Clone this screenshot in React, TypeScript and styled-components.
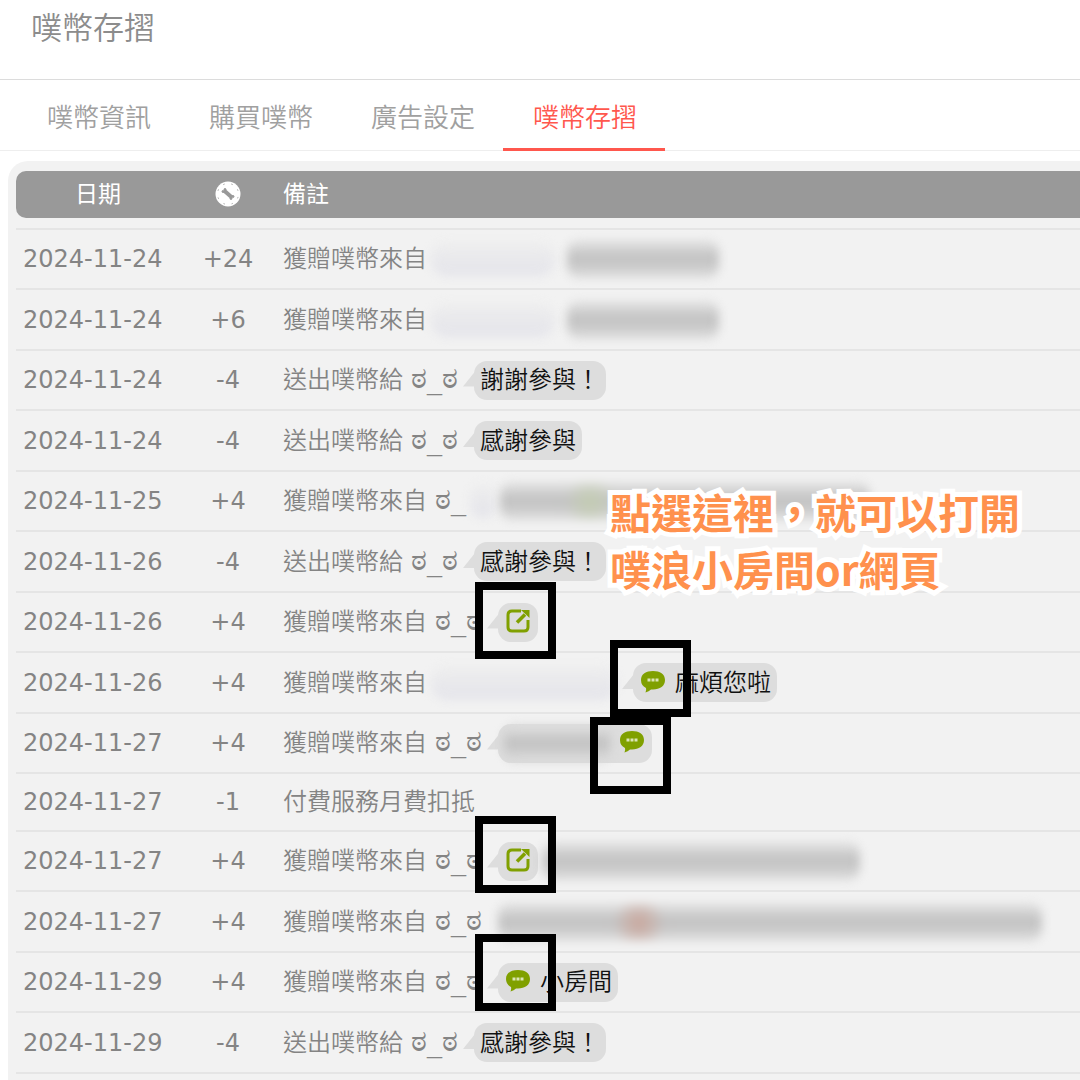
import React from 'react';
import styled, { createGlobalStyle, css } from 'styled-components';

const GlobalStyle = createGlobalStyle`
  * { box-sizing: border-box; }
  body {
    margin: 0;
    background: #fff;
    color: #848484;
    font-family: 'DejaVu Sans', 'Noto Sans CJK TC', sans-serif;
  }
`;

const Page = styled.div`
  display: flex;
  flex-direction: column;
  min-height: 100vh;
  overflow-x: hidden;
`;

const Header = styled.header`
  height: 80px;
  padding: 5px 31px 0;
  border-bottom: 1px solid #dcdcdc;
`;

const Title = styled.h1`
  margin: 0;
  font-size: 31px;
  line-height: 46px;
  font-weight: 350;
  color: #8c8c8c;
`;

const Tabs = styled.nav`
  display: flex;
  height: 71px;
  padding-left: 17px;
  border-bottom: 1px solid #eee;
`;

const Tab = styled.a<{ $active?: boolean }>`
  width: 162px;
  height: 71px;
  padding-left: 2px;
  line-height: 76px;
  text-align: center;
  font-size: 26px;
  font-weight: 350;
  text-decoration: none;
  color: ${(p) => (p.$active ? '#ff574d' : '#a0a0a0')};
  border-bottom: 3px solid ${(p) => (p.$active ? '#ff574d' : 'transparent')};
`;

const Panel = styled.main`
  position: relative;
  flex: 1;
  margin: 10px 0 0 8px;
  padding: 10px 0 6px 8px;
  border-radius: 20px 0 0 0;
  background: #f2f2f2;
`;

const Ledger = styled.table`
  width: 100%;
  table-layout: fixed;
  border-collapse: separate;
  border-spacing: 0;
  font-size: 24px;
`;

const HeadCell = styled.th<{ $width?: number; $left?: boolean }>`
  width: ${(p) => (p.$width ? `${p.$width}px` : 'auto')};
  height: 47px;
  padding: 0 7px 2px;
  background: #999;
  color: #fff;
  font-size: 23px;
  line-height: 30px;
  font-weight: 400;
  text-align: ${(p) => (p.$left ? 'left' : 'center')};
  &:first-child { border-radius: 10px 0 0 10px; }
  svg { display: block; margin: 0 auto; }
`;

const Body = styled.tbody`
  &::before {
    content: '';
    display: block;
    height: 10px;
  }
`;

const Cell = styled.td<{ $center?: boolean }>`
  padding: 0 7px;
  border-top: 2px solid #e5e5e5;
  line-height: 30px;
  white-space: nowrap;
  text-align: ${(p) => (p.$center ? 'center' : 'left')};
`;

const Row = styled.tr<{ $plain?: boolean }>`
  height: ${(p) => (p.$plain ? 58 : 60)}px;
  ${(p) => !p.$plain && css`&:nth-child(even) { height: 61px; }`}
  &:last-child { height: 63px; }
  &:last-child ${Cell} { border-bottom: 2px solid #e5e5e5; }
`;

const Note = styled.div`
  display: flex;
  align-items: center;
  height: 39px;
  font-weight: 350;
`;

const Face = styled.span`
  margin-left: 8px;
  font-size: 30px;
  line-height: 34px;
  height: 38px;
`;

const Bubble = styled.span`
  position: relative;
  display: inline-flex;
  align-items: center;
  gap: 8px;
  height: 39px;
  margin-left: 16px;
  padding: 0 6px;
  border-radius: 13px;
  background: #ddd;
  color: #111;
  &::before {
    content: '';
    position: absolute;
    left: -11px;
    top: 11px;
    width: 12px;
    height: 15px;
    background: #ddd;
    clip-path: polygon(0 100%, 100% 0, 100% 100%);
  }
`;

const IconLink = styled.a`
  display: block;
  width: 28px;
  height: 26px;
  padding: 0 2px;
  color: #80a000;
  svg { display: block; }
`;

const SmudgedName = styled.span<{ $width: number }>`
  width: ${(p) => p.$width}px;
  height: 34px;
  margin-left: 4px;
  border-radius: 16px;
  background: linear-gradient(#eeeeee, #e4e4ea);
  filter: blur(5px);
`;

const SmudgedText = styled.span<{ $width: number; $gap?: number; $tint?: string; $at?: number }>`
  width: ${(p) => p.$width}px;
  height: 38px;
  margin-left: ${(p) => p.$gap ?? 12}px;
  border-radius: 12px;
  background:
    ${(p) => p.$tint && css`radial-gradient(circle at ${p.$at}px 20px, ${p.$tint}, transparent 26px),`}
    linear-gradient(#e4e4e4, #c0c0c0 50%, #dedede);
  filter: blur(5px);
`;

const Annotations = styled.div`
  position: absolute;
  inset: 0;
  pointer-events: none;
`;

const Frame = styled.span<{ $x: number; $y: number }>`
  position: absolute;
  left: ${(p) => p.$x}px;
  top: ${(p) => p.$y}px;
  width: 81px;
  height: 77px;
  border: 8px solid #000;
`;

const Callout = styled.p`
  position: absolute;
  left: 602px;
  top: 322px;
  margin: 0;
  font-family: 'Noto Sans CJK TC', sans-serif;
  font-size: 41px;
  line-height: 57px;
  font-weight: 700;
  white-space: nowrap;
  color: #ff914d;
  -webkit-text-stroke: 10px #fff;
  paint-order: stroke fill;
`;

const CoinIcon = () => (
  <svg width="26" height="26" viewBox="0 0 26 26" role="img" aria-label="噗幣">
    <circle cx="13" cy="13" r="12.5" fill="#fff" />
    <circle cx="13" cy="13" r="10.5" fill="none" stroke="#aaa" strokeWidth="1" strokeDasharray="1.5 6.75" strokeDashoffset="-3" />
    <g fill="#999" stroke="#999">
      <path d="M9 9.500 17 16.500" strokeWidth="4" />
      <circle cx="8" cy="10.500" r="1" /><circle cx="10" cy="8.500" r="1" />
      <circle cx="16" cy="17.500" r="1" /><circle cx="18" cy="15.500" r="1" />
    </g>
  </svg>
);

const OpenIcon = () => (
  <svg width="24" height="24" viewBox="0 0 24 24" fill="none" stroke="currentColor" strokeWidth="3">
    <path d="M15 2H6Q2 2 2 6V18Q2 22 6 22H18Q22 22 22 18V11" />
    <path d="M11 13.500 19 5.500" strokeWidth="3.500" />
    <path d="M15 1H23.500V9Q19.500 5 15 1Z" fill="currentColor" stroke="none" />
  </svg>
);

const ChatIcon = () => (
  <svg width="24" height="24" viewBox="0 0 24 24">
    <path
      d="M12 1C19 1 24 4 24 10S19 19.500 12 19.500H10Q8 21.500 4.500 22.500Q5.500 20 5 18Q0 15.500 0 10C0 4 5 1 12 1Z"
      fill="currentColor"
    />
    <path d="M6.500 8.500h3v3h-3zM10.500 8.500h3v3h-3zM14.500 8.500h3v3h-3z" fill="#dce5b8" />
  </svg>
);

type Icon = 'open' | 'chat';

const ActionLink = ({ icon }: { icon: Icon }) => (
  <IconLink href="#" aria-label={icon === 'open' ? '打開網頁' : '打開噗浪小房間'}>
    {icon === 'open' ? <OpenIcon /> : <ChatIcon />}
  </IconLink>
);

const Got = ({ children }: { children?: React.ReactNode }) => (
  <Note>獲贈噗幣來自{children}</Note>
);

const Sent = ({ message }: { message: string }) => (
  <Note>
    送出噗幣給<Face>ಠ_ಠ</Face>
    <Bubble>{message}</Bubble>
  </Note>
);

type Entry = { date: string; amount: string; note: React.ReactNode; plain?: boolean };

const entries: Entry[] = [
  { date: '2024-11-24', amount: '+24', note: <Got><SmudgedName $width={124} /><SmudgedText $width={152} /></Got> },
  { date: '2024-11-24', amount: '+6', note: <Got><SmudgedName $width={124} /><SmudgedText $width={152} /></Got> },
  { date: '2024-11-24', amount: '-4', note: <Sent message="謝謝參與！" /> },
  { date: '2024-11-24', amount: '-4', note: <Sent message="感謝參與" /> },
  { date: '2024-11-25', amount: '+4', note: <Got><Face>ಠ_</Face><SmudgedName $width={26} /><SmudgedText $width={370} $gap={4} $tint="#c3ccb2" $at={90} /></Got> },
  { date: '2024-11-26', amount: '-4', note: <Sent message="感謝參與！" /> },
  { date: '2024-11-26', amount: '+4', note: <Got><Face>ಠ_ಠ</Face><Bubble><ActionLink icon="open" /></Bubble></Got> },
  { date: '2024-11-26', amount: '+4', note: <Got><SmudgedName $width={186} /><Bubble><ActionLink icon="chat" />麻煩您啦</Bubble></Got> },
  { date: '2024-11-27', amount: '+4', note: <Got><Face>ಠ_ಠ</Face><Bubble><SmudgedText $width={106} $gap={0} /><ActionLink icon="chat" /></Bubble></Got> },
  { date: '2024-11-27', amount: '-1', note: <Note>付費服務月費扣抵</Note>, plain: true },
  { date: '2024-11-27', amount: '+4', note: <Got><Face>ಠ_ಠ</Face><Bubble><ActionLink icon="open" /></Bubble><SmudgedText $width={318} $gap={4} /></Got> },
  { date: '2024-11-27', amount: '+4', note: <Got><Face>ಠ_ಠ</Face><SmudgedText $width={544} $gap={16} $tint="#c9a79d" $at={141} /></Got> },
  { date: '2024-11-29', amount: '+4', note: <Got><Face>ಠ_ಠ</Face><Bubble><ActionLink icon="chat" />小房間</Bubble></Got> },
  { date: '2024-11-29', amount: '-4', note: <Sent message="感謝參與！" /> },
];

const frames = [
  { x: 467, y: 421 },
  { x: 602, y: 479 },
  { x: 582, y: 556 },
  { x: 467, y: 655 },
  { x: 467, y: 773 },
];

export default function App() {
  return (
    <Page>
      <GlobalStyle />
      <Header>
        <Title>噗幣存摺</Title>
      </Header>
      <Tabs>
        <Tab href="#">噗幣資訊</Tab>
        <Tab href="#">購買噗幣</Tab>
        <Tab href="#">廣告設定</Tab>
        <Tab href="#" $active aria-current="page">噗幣存摺</Tab>
      </Tabs>
      <Panel>
        <Ledger>
          <thead>
            <tr>
              <HeadCell $width={164}>日期</HeadCell>
              <HeadCell $width={96}><CoinIcon /></HeadCell>
              <HeadCell $left>備註</HeadCell>
            </tr>
          </thead>
          <Body>
            {entries.map((entry, i) => (
              <Row key={i} $plain={entry.plain}>
                <Cell>{entry.date}</Cell>
                <Cell $center>{entry.amount}</Cell>
                <Cell>{entry.note}</Cell>
              </Row>
            ))}
          </Body>
        </Ledger>
        <Annotations>
          {frames.map((f) => (
            <Frame key={`${f.x}-${f.y}`} $x={f.x} $y={f.y} />
          ))}
          <Callout>
            點選這裡，就可以打開
            <br />
            噗浪小房間or網頁
          </Callout>
        </Annotations>
      </Panel>
    </Page>
  );
}
